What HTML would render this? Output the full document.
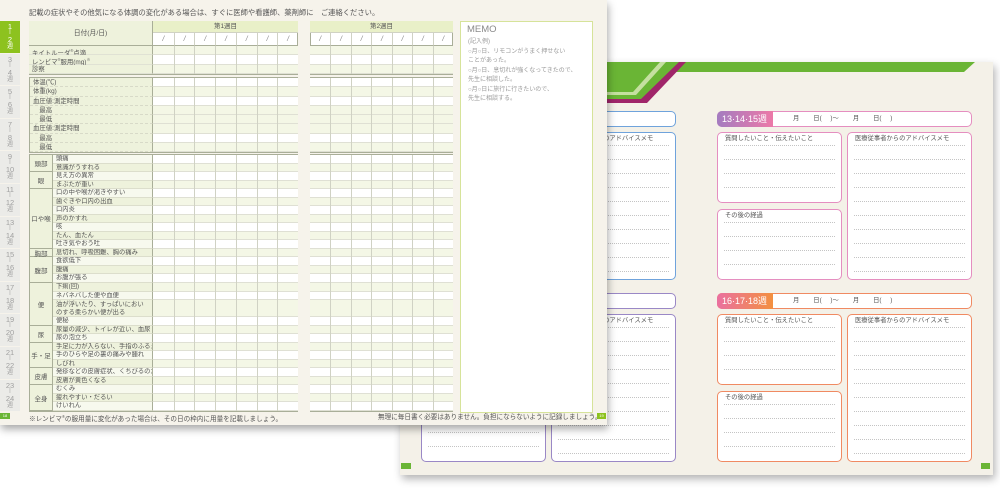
<!DOCTYPE html>
<html><head><meta charset="utf-8">
<style>
html,body{margin:0;padding:0;width:1000px;height:488px;overflow:hidden;background:#fff;font-family:"Liberation Sans","Noto Sans CJK JP",sans-serif;color:#555;}
.t{position:absolute;white-space:nowrap;line-height:1;}
</style></head>
<body>
<script>
const B=document.body;
function d(x,y,w,h,css,t){const e=document.createElement('div');e.style.cssText=`position:absolute;left:${x}px;top:${y}px;width:${w}px;height:${h}px;box-sizing:border-box;`+(css||'');if(t!=null)e.innerHTML=t;B.appendChild(e);return e;}
function tx(x,y,s,t,css){const e=document.createElement('div');e.className='t';e.style.cssText=`left:${x}px;top:${y}px;font-size:${s}px;`+(css||'');e.innerHTML=t;B.appendChild(e);return e;}

/* ===== BACK PAGE ===== */
d(400,62,593,413,'background:#f4f1e8;box-shadow:2px 4px 8px rgba(0,0,0,.3);');
B.insertAdjacentHTML('beforeend',`<svg style="position:absolute;left:0;top:0" width="1000" height="488">
<polygon points="400,62 975,62 964,72 400,72" fill="#6ab535"/>
<polygon points="400,62 686,62 647,103 400,103" fill="#a0266a"/>
<polygon points="400,62 679,62 641,99 400,99" fill="#6ab535"/>
<polygon points="400,92 633,92 660,62 666,62 636,95 400,95" fill="#c5e0a0"/>
</svg>`);
function hdr(x,y,w,col,grad,lab){
  d(x,y,w,16,`border:1px solid ${col};border-radius:5px;background:#fff;overflow:hidden;`);
  d(x,y,56,16,`background:${grad};border-radius:5px 0 0 5px;`);
  tx(x+5,y+3.5,9,lab,'color:#fff;');
  tx(x+76,y+5,6.3,'月&nbsp;&nbsp;&nbsp;&nbsp;&nbsp;&nbsp;&nbsp;&nbsp;日(&nbsp;&nbsp;&nbsp;&nbsp;&nbsp;)〜&nbsp;&nbsp;&nbsp;&nbsp;&nbsp;&nbsp;&nbsp;&nbsp;月&nbsp;&nbsp;&nbsp;&nbsp;&nbsp;&nbsp;&nbsp;&nbsp;日(&nbsp;&nbsp;&nbsp;&nbsp;&nbsp;)');
}
function box(x,y,w,h,col,title){
  d(x,y,w,h,`border:1px solid ${col};border-radius:5px;background:#fff;`);
  tx(x+8,y+4,6.3,title);
  for(let ly=y+13;ly<y+h-6;ly+=14) d(x+7,ly,w-14,1,'border-top:1px dotted #c4c4c4;');
}
function col(x,y,c,grad,lab){
  hdr(x,y,255,c,grad,lab);
  box(x,y+21,125,71,c,'質問したいこと・伝えたいこと');
  box(x,y+98,125,71,c,'その後の経過');
  box(x+130,y+21,125,148,c,'医療従事者からのアドバイスメモ');
}
col(421,111,'#6fa3dc','linear-gradient(90deg,#5b8fd0,#7ab0e4)','10·11·12週');
col(717,111,'#e58ec0','linear-gradient(90deg,#a47cc0,#ec79a8)','13·14·15週');
col(421,293,'#9a88c6','linear-gradient(90deg,#8a78c0,#a890d0)','19·20·21週');
col(717,293,'#f08a62','linear-gradient(90deg,#ea70a0,#f39040)','16·17·18週');
d(401,463,10,6,'background:#6ab535;');
d(981,463,9,6,'background:#6ab535;');

/* ===== FRONT PAGE ===== */
d(0,0,607,425,'background:#f6f3eb;box-shadow:1px 4px 8px rgba(0,0,0,.35);');
const tabs=['1|2','3|4','5|6','7|8','9|10','11|12','13|14','15|16','17|18','19|20','21|22','23|24'];
tabs.forEach((t,i)=>{const y=21+i*32.6;const a=i==0;const [p,q]=t.split('|');
 const c=a?'#fff':'#a0a0a0';
 d(0,y,20,31.6,`background:${a?'#8dc21f':'#ebebe8'};`);
 const st=`width:20px;text-align:center;color:${c};`;
 tx(0,y+2,7.5,p,st); tx(0,y+9,5.5,'|',st); tx(0,y+15,7.5,q,st); tx(0,y+23,6,'週',st);
});
d(0,413,10,6,'background:#6ab535;color:#fff;font-size:4px;text-align:center;line-height:6px;','18');
d(597,413,9,6,'background:#8dc21f;color:#fff;font-size:4px;text-align:center;line-height:6px;','19');
tx(29,9,7.3,'記載の症状やその他気になる体調の変化がある場合は、すぐに医師や看護師、薬剤師に　ご連絡ください。');
tx(29,415,6.6,'※レンビマ<sup style="font-size:4px">®</sup>の服用量に変化があった場合は、その日の枠内に用量を記載しましょう。');
tx(378,415,6.6,'無理に毎日書く必要はありません。負担にならないように記録しましょう。');

const BC='#a9ae98', LC='#d0d2c4', LG='#eef2dc', DG='#f4f7e6';
function dataRows(xl,x1,y0,n,rh,alt){
  const cw=(x1-xl)/7;
  for(let r=0;r<n;r++){const y=y0+r*rh;
    d(xl,y,x1-xl,rh,`background:${alt(r)?DG:'#fff'};border-bottom:1px solid #dfe0d4;`);}
  for(let c=1;c<7;c++) d(xl+c*cw,y0,1,n*rh,`background:${LC};`);
}
function table(x0,xl,x1,lab,wk){
  d(x0,21,x1-x0,54,`border:1px solid ${BC};background:#fff;`);
  d(xl,21,x1-xl,12,`background:#e9f0c8;border-bottom:1px solid ${LC};font-size:6.5px;text-align:center;line-height:12px;`,wk);
  const cw=(x1-xl)/7;
  for(let c=0;c<7;c++) d(xl+c*cw,33,cw,13,`${c?'border-left:1px solid '+LC+';':''}border-bottom:1px solid ${BC};font-size:7px;color:#888;text-align:center;line-height:13px;font-style:italic;`,'/');
  dataRows(xl,x1,46,3,9.33,r=>r%2==0);
  if(lab){
    d(x0,21,xl-x0,25,`background:${LG};border-right:1px solid ${BC};border-bottom:1px solid ${BC};font-size:6.8px;text-align:center;line-height:25px;`,'日付(月/日)');
    ['キイトルーダ<sup style="font-size:4px">®</sup>点滴','レンビマ<sup style="font-size:4px">®</sup>服用(mg)<sup style="font-size:4px">※</sup>','診察'].forEach((t,i)=>d(x0,46+i*9.33,xl-x0,9.33,`background:${LG};border-right:1px solid ${BC};border-bottom:1px solid #e0e2d4;font-size:6.4px;line-height:9.3px;padding-left:3px;`,t));
  }
  d(x0,77,x1-x0,76,`border:1px solid ${BC};background:#fff;`);
  dataRows(xl,x1,78,8,9.25,r=>r%2==1||r==4);
  if(lab){
    ['体温(℃)','体重(kg)','血圧値:測定時間','　最高','　最低','血圧値:測定時間','　最高','　最低'].forEach((t,i)=>d(x0+1,78+i*9.25,xl-x0-1,9.25,`background:${LG};border-right:1px solid ${BC};border-bottom:1px dashed #d8dac8;font-size:6.4px;line-height:9.2px;padding-left:3px;`,t));
  }
  d(x0,154,x1-x0,258,`border:1px solid ${BC};background:#fff;`);
  const rh=256/30;
  const items=[['頭部',['頭痛','意識がうすれる']],['眼',['見え方の異常','まぶたが重い']],['口や喉',['口の中や喉が渇きやすい','歯ぐきや口内の出血','口内炎','声のかすれ','咳','たん、血たん','吐き気やおう吐']],['胸部',['息切れ、呼吸困難、胸の痛み']],['腹部',['食欲低下','腹痛','お腹が張る']],['便',['下痢(回)','ネバネバした便や血便','油が浮いたり、すっぱいにおい<br>のする柔らかい便が出る','便秘']],['尿',['尿量の減少、トイレが近い、血尿','尿の泡立ち']],['手・足',['手足に力が入らない、手指のふるえ','手のひらや足の裏の痛みや腫れ','しびれ']],['皮膚',['発疹などの皮膚症状、くちびるのただれ','皮膚が黄色くなる']],['全身',['むくみ','疲れやすい・だるい','けいれん']]];
  let u=0, ri=0; const y0=155;
  const cw2=(x1-xl)/7;
  items.forEach(([g,its])=>{
    const gy=y0+u*rh; let gu=0;
    its.forEach(t=>{const n=t.includes('<br>')?2:1; const y=y0+u*rh;
      d(xl,y,x1-xl,n*rh,`background:${ri%2?DG:'#fff'};border-bottom:1px solid #dfe0d4;`);
      if(lab) d(53,y,xl-53,n*rh,`background:${ri%2?LG:'#f7f9ee'};border-right:1px solid ${BC};border-bottom:1px solid #dcdecc;font-size:6.3px;line-height:${n==2?7.6:rh}px;padding-left:3px;padding-top:${n==2?1:0}px;white-space:nowrap;overflow:hidden;`,t);
      u+=n;gu+=n;ri++;});
    if(lab) d(x0+1,gy,53-x0-1,gu*rh,`background:${LG};border-right:1px solid ${BC};border-bottom:1px solid ${BC};font-size:6.5px;display:flex;align-items:center;justify-content:center;`,g);
  });
  for(let c=1;c<7;c++) d(xl+c*cw2,155,1,256,`background:${LC};`);
}
table(29,153,298,true,'第1週目');
table(310,310,453,false,'第2週目');

d(460,21,133,392,'border:1px solid #d6e39a;background:#fff;');
tx(467,25,9.5,'MEMO','color:#8a8a8a;');
const mm=['(記入例)','○月○日、リモコンがうまく押せない','ことがあった。','○月○日、息切れが強くなってきたので、','先生に相談した。','○月○日に旅行に行きたいので、','先生に相談する。'];
const my=[39,49,58,68,77,87,96];
mm.forEach((t,i)=>tx(468,my[i],6,t,'color:#9a9a9a;'));
</script>
</body></html>
